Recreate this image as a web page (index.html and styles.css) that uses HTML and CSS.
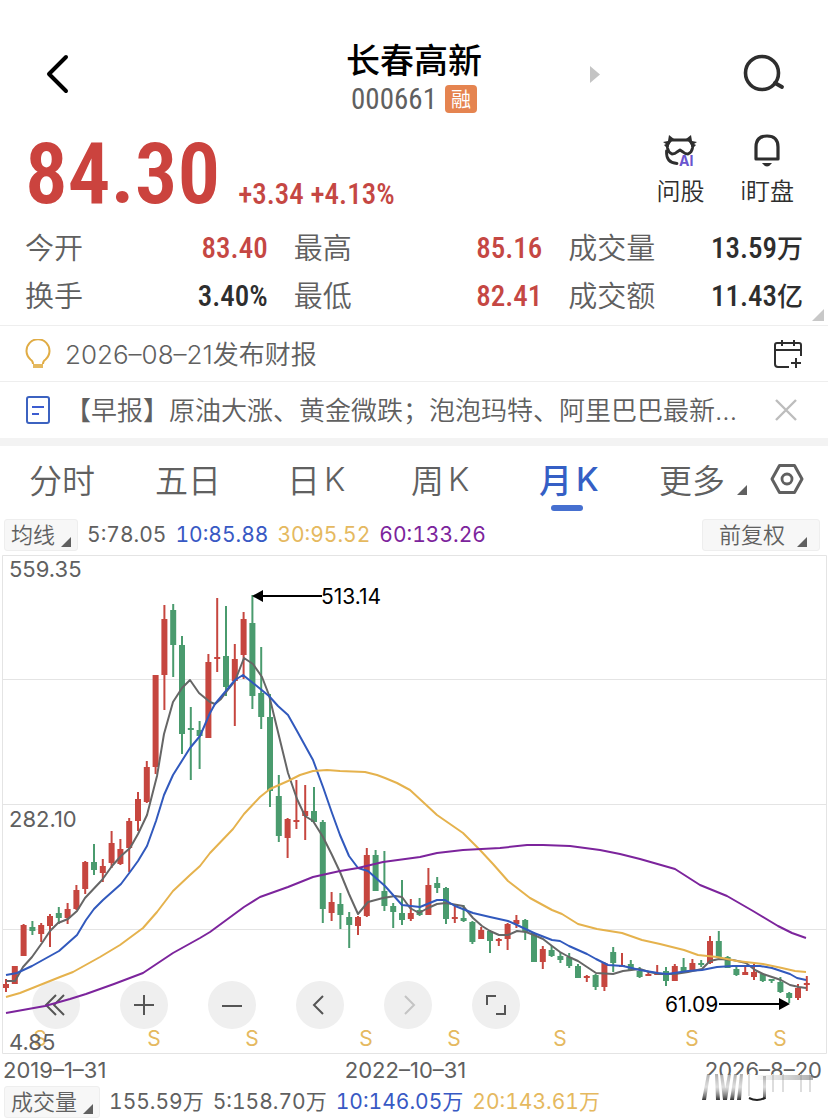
FILE: index.html
```
<!DOCTYPE html>
<html lang="zh-CN">
<head>
  <meta charset="UTF-8" />
  <meta name="viewport" content="width=device-width, initial-scale=1.0"/>
  <title>长春高新 000661</title>
  <link rel="stylesheet" href="styles.css">
</head>
<body>
  <header class="topbar">
    <button class="icon-btn back" aria-label="返回">
      <svg width="24" height="40" viewBox="0 0 24 40"><path d="M21 3 L4 20 L21 37" fill="none" stroke="#000" stroke-width="4" stroke-linecap="round" stroke-linejoin="round"/></svg>
    </button>
    <div class="stock">
      <h1>长春高新</h1>
      <div class="code"><span>000661</span><span class="tag">融</span></div>
    </div>
    <div class="side">
      <button class="icon-btn" aria-label="下一只">
        <svg width="10" height="17" viewBox="0 0 10 17"><path d="M0 0 L10 8.5 L0 17Z" fill="#c4c4c4"/></svg>
      </button>
      <button class="icon-btn" aria-label="搜索">
        <svg width="42" height="40" viewBox="0 0 42 40"><circle cx="19" cy="19" r="16.5" fill="none" stroke="#2e2e2e" stroke-width="3.6"/><path d="M32 29 L39 33" stroke="#2e2e2e" stroke-width="3.8" stroke-linecap="round"/></svg>
      </button>
    </div>
  </header>

  <section class="quote">
    <div class="price">84.30</div>
    <div class="change">+3.34 +4.13%</div>
    <div class="actions">
      <button class="action">
        <svg width="36" height="34" viewBox="0 0 36 34">
          <g fill="none" stroke="#2e2e2e" stroke-width="2.8" stroke-linejoin="round" stroke-linecap="round">
            <path d="M9 6 H27 Q31 9 30.500 14 Q30 18 26 20 Q23 20 21 18 L18 16 L15 18 Q13 20 10 20 Q6 18 5.500 14 Q5 9 9 6Z"/>
            <path d="M4.500 17 Q4 29 15 29.500"/>
          </g>
          <path d="M7 1 L12 5 L9 8 L5 14 L2 11 L4 10 L1 8 L6 7Z M29 1 L24 5 L27 8 L31 14 L34 11 L32 10 L35 8 L30 7Z" fill="#2e2e2e"/>
          <text class="ai" x="17" y="32">AI</text>
        </svg>
        <span>问股</span>
      </button>
      <button class="action">
        <svg width="36" height="34" viewBox="0 0 36 34"><path d="M7 25 V13 Q7 2 18 2 Q29 2 29 13 V25Z" fill="none" stroke="#2e2e2e" stroke-width="3.200" stroke-linejoin="round"/><path d="M13 29 H23 Q18 36 13 29Z" fill="#2e2e2e"/></svg>
        <span>i盯盘</span>
      </button>
    </div>
  </section>

  <section class="stats">
    <dl>
      <div><dt>今开</dt><dd class="up">83.40</dd></div>
      <div><dt>最高</dt><dd class="up">85.16</dd></div>
      <div><dt>成交量</dt><dd>13.59<small>万</small></dd></div>
      <div><dt>换手</dt><dd>3.40%</dd></div>
      <div><dt>最低</dt><dd class="up">82.41</dd></div>
      <div><dt>成交额</dt><dd>11.43<small>亿</small></dd></div>
    </dl>
  </section>

  <section class="notice">
    <svg width="26" height="30" viewBox="0 0 26 30"><path d="M8 25 Q8 22 5.500 20.500 A11.500 11.500 0 1 1 20.500 20.500 Q18 22 18 25" fill="none" stroke="#e0ac45" stroke-width="2"/><path d="M8 25 H18 V29 H8Z" fill="#e5b95f"/></svg>
    <p>2026–08–21发布财报</p>
    <button class="icon-btn" aria-label="添加日程">
      <svg width="30" height="30" viewBox="0 0 30 30"><path d="M28 17 V6 Q28 4 26 4 H4 Q2 4 2 6 V25 Q2 28 5 28 H16 M2 11 H28 M9 1 V7 M21 1 V7 M23 19 V29 M18 24 H28" fill="none" stroke="#2e2e2e" stroke-width="2"/></svg>
    </button>
  </section>
  <section class="notice">
    <svg width="26" height="30" viewBox="0 0 26 30"><rect x="2" y="2" width="22" height="26" rx="2" fill="none" stroke="#3c62c0" stroke-width="2"/><path d="M7 12 H19 M7 19 H14" stroke="#3c5cd0" stroke-width="2"/></svg>
    <p>【早报】原油大涨、黄金微跌；泡泡玛特、阿里巴巴最新...</p>
    <button class="icon-btn close" aria-label="关闭">
      <svg width="22" height="22" viewBox="0 0 22 22"><path d="M1 1 L21 21 M21 1 L1 21" stroke="#bdbdbd" stroke-width="2.400"/></svg>
    </button>
  </section>

  <nav class="tabs">
    <button>分时</button>
    <button>五日</button>
    <button>日<span>K</span></button>
    <button>周<span>K</span></button>
    <button class="active">月<span>K</span></button>
    <button>更多<i class="corner"></i></button>
    <button class="icon-btn" aria-label="设置">
      <svg width="34" height="32" viewBox="0 0 34 32"><path d="M9.500 2.500 H24.500 L32 16 L24.500 29.500 H9.500 L2 16Z" fill="none" stroke="#606060" stroke-width="3" stroke-linejoin="round"/><circle cx="17" cy="16" r="5" fill="none" stroke="#606060" stroke-width="2.800"/></svg>
    </button>
  </nav>

  <div class="legend">
    <button class="pick">均线<i class="corner"></i></button>
    <span>5:78.05</span>
    <span class="ma10">10:85.88</span>
    <span class="ma30">30:95.52</span>
    <span class="ma60">60:133.26</span>
    <button class="pick right">前复权<i class="corner"></i></button>
  </div>

  <main class="chart">
    <div class="tools">
      <button aria-label="最早"><svg viewBox="0 0 48 48"><path d="M24 14 L14 24 L24 34 M32 14 L22 24 L32 34"/></svg></button>
      <button aria-label="放大"><svg viewBox="0 0 48 48"><path d="M24 14 V34 M14 24 H34"/></svg></button>
      <button aria-label="缩小"><svg viewBox="0 0 48 48"><path d="M14 25 H34"/></svg></button>
      <button aria-label="向左"><svg viewBox="0 0 48 48"><path d="M27 15 L18 24 L27 33"/></svg></button>
      <button aria-label="向右" disabled><svg viewBox="0 0 48 48"><path d="M21 15 L30 24 L21 33"/></svg></button>
      <button aria-label="全屏"><svg viewBox="0 0 48 48"><path d="M15 24 V15 H24 M33 24 V33 H24"/></svg></button>
    </div>
    <svg id="kline" viewBox="0 0 828 499">
      <path class="grid" d="M2.500 0.500 H826.500 V498.500 H2.500Z M2.500 124.500 H826.500 M2.500 249.500 H826.500 M2.500 374.500 H826.500"/>
      <g id="candles"></g>
      <g id="averages"></g>
      <g id="signals"></g>
      <text x="9" y="22">559.35</text>
      <text x="9" y="272">282.10</text>
      <text x="9" y="495">4.85</text>
      <g class="mark">
        <path d="M262 41 H322 M719 449 H780"/>
        <path class="head" d="M252 41 L263 35 V47Z M790 449 L779 443 V455Z"/>
        <text x="321" y="49">513.14</text>
        <text x="665" y="457">61.09</text>
      </g>
    </svg>
  </main>

  <div class="dates">
    <span>2019–1–31</span>
    <span>2022–10–31</span>
    <span class="last">2026–8–20
      <svg class="smear" width="124" height="38" viewBox="0 0 124 38">
        <defs>
          <linearGradient id="fade" x1="0" y1="0" x2="0" y2="1">
            <stop offset="0" stop-color="#777" stop-opacity="0.6"/>
            <stop offset="0.5" stop-color="#aaa" stop-opacity="0.4"/>
            <stop offset="1" stop-color="#333"/>
          </linearGradient>
          <linearGradient id="haze" x1="0" y1="0" x2="1" y2="0">
            <stop offset="0" stop-color="#999" stop-opacity="0"/>
            <stop offset="1" stop-color="#777" stop-opacity="0.6"/>
          </linearGradient>
          <filter id="soft"><feGaussianBlur stdDeviation="0.7"/></filter>
        </defs>
        <path d="M0 11 H110 V18 H124 V38 H0Z" fill="#fff"/>
        <g filter="url(#soft)">
          <path d="M6 10 H9 L5 36 H1Z M14 10 H17 L19 36 H15Z M19 10 H22 L26 36 H22Z M27 10 H30 L26 36 H22Z M33 10 H36 L33 36 H29Z M39 10 H42 L40 36 H36Z M62 12 H65 V35 H62Z" fill="url(#fade)"/>
          <path d="M48 10 V32 M72 10 V28 M82 10 V28 M100 10 V28 M109 10 V28" stroke="#ddd" stroke-width="2"/>
          <rect x="50" y="11" width="62" height="5" fill="url(#haze)"/>
        </g>
        <path d="M48 34 Q56 38 64 34" fill="none" stroke="#222" stroke-width="2"/>
      </svg>
    </span>
  </div>

  <div class="legend volume">
    <button class="pick">成交量<i class="corner"></i></button>
    <span>155.59万</span>
    <span>5:158.70万</span>
    <span class="ma10">10:146.05万</span>
    <span class="ma30">20:143.61万</span>
  </div>

  <script>
    const step = 8.8;
    const left = 6;

    // direction, high, body top, body bottom, low (one entry per month)
    const candles = [
      ['r',424,429,433,437], ['r',411,411,429,429], ['r',369,370,401,401], ['g',366,372,376,380],
      ['r',368,370,379,387], ['r',359,361,371,392], ['g',352,358,363,369], ['r',348,354,363,369],
      ['r',330,335,354,355], ['r',306,307,334,339], ['g',289,307,315,320], ['r',304,311,318,327],
      ['r',276,288,308,313], ['r',284,294,309,310], ['r',263,266,293,317], ['r',237,244,266,276],
      ['r',206,212,247,248], ['r',120,120,212,219], ['r',50,64,120,155], ['g',49,55,90,122],
      ['g',81,90,179,199], ['g',152,173,175,225], ['g',166,175,181,214], ['r',99,107,183,183],
      ['r',43,102,103,117], ['g',51,101,132,141], ['r',89,104,126,171], ['r',57,64,100,124],
      ['g',40,68,141,154], ['g',92,138,162,174], ['g',139,162,236,252], ['g',220,241,281,287],
      ['r',263,264,283,303], ['r',225,265,266,274], ['r',230,256,261,285], ['g',232,256,267,268],
      ['g',265,267,354,368], ['r',337,347,358,366], ['g',338,349,360,374], ['g',357,362,370,393],
      ['r',361,362,371,380], ['r',293,300,361,362], ['g',295,300,336,336], ['g',296,336,351,356],
      ['g',348,351,357,373], ['g',325,358,365,370], ['r',344,358,364,366], ['g',343,355,360,361],
      ['r',313,330,360,360], ['g',322,328,333,338], ['g',332,333,364,369], ['r',351,362,363,368],
      ['g',350,363,366,367], ['g',366,367,387,389], ['r',372,375,384,384], ['g',375,376,386,398],
      ['r',383,384,385,391], ['r',368,369,384,395], ['r',360,365,369,373], ['g',364,365,377,385],
      ['g',377,378,407,407], ['r',391,394,407,414], ['g',391,395,401,402], ['g',397,401,405,408],
      ['g',398,402,411,413], ['g',409,411,423,423], ['r',420,421,422,427], ['g',419,420,432,435],
      ['r',407,408,432,436], ['g',392,397,408,417], ['r',398,410,411,412], ['g',405,409,415,415],
      ['g',412,416,422,423], ['r',417,419,421,421], ['r',410,418,420,420], ['g',412,416,426,431],
      ['r',409,411,426,426], ['g',403,412,416,417], ['r',404,408,416,416], ['g',405,408,410,412],
      ['r',381,386,408,409], ['g',376,386,402,402], ['g',401,402,413,413], ['g',412,414,420,421],
      ['r',410,417,420,420], ['r',409,417,422,425], ['g',418,419,426,427], ['g',424,424,425,428],
      ['g',422,427,437,438], ['g',437,438,443,448], ['r',429,433,443,445], ['r',421,428,429,436]
    ];

    const averages = {
      ma5: '6,426 15,426 23,412 32,402 42,388 50,376 58,368 68,364 77,356 85,343 102,325 112,311 121,301 130,293 138,279 147,260 157,221 164,179 173,147 182,133 190,125 199,138 210,147 215,149 221,144 227,136 235,126 244,103 253,109 262,122 269,140 278,177 288,218 297,244 305,261 313,266 323,282 332,300 340,317 349,339 358,359 368,347 383,343 395,341 402,342 410,353 419,358 428,353 437,349 446,348 463,351 473,363 482,371 490,376 499,380 508,380 517,376 526,377 534,380 543,384 552,391 560,397 569,402 578,406 587,412 596,418 613,419 623,416 640,414 649,417 660,419 675,419 688,417 702,414 710,406 719,404 733,405 746,408 755,415 763,419 781,425 790,430 799,432 806,433',
      ma10: '6,420 17,418 32,411 50,401 59,396 77,380 86,365 94,354 103,345 121,329 130,317 138,306 147,291 156,266 164,240 173,220 190,193 200,181 210,158 215,149 225,137 235,125 243,120 253,128 269,141 278,151 288,160 297,176 313,205 323,232 332,258 340,280 349,301 358,313 368,316 385,331 402,350 411,351 420,352 437,345 445,345 455,351 473,358 490,362 508,366 517,370 534,378 552,385 560,386 569,391 587,399 596,404 608,410 623,411 640,415 658,418 667,419 688,416 702,415 717,412 733,411 760,411 772,413 781,416 790,419 797,423 806,425',
      ma30: '6,442 20,438 40,430 60,422 73,417 100,402 120,390 143,373 157,357 173,336 190,320 200,311 210,298 233,274 244,259 260,242 270,234 288,226 300,220 313,216 327,215 340,216 365,217 377,220 385,223 397,228 410,235 423,247 437,260 463,278 480,295 493,309 508,326 530,343 552,355 562,359 578,369 597,374 622,378 642,385 660,389 684,395 698,400 717,402 737,406 763,409 782,413 795,416 806,417',
      ma60: '6,458 45,451 70,444 86,439 114,429 143,418 173,398 200,383 210,377 244,352 260,342 288,332 313,322 340,316 358,313 383,307 420,302 437,298 463,295 500,293 527,290 543,290 570,291 600,295 620,299 640,304 675,314 700,330 727,341 753,356 778,371 792,378 806,383'
    };

    const signals = [40, 154, 252, 366, 454, 560, 692, 780];

    document.getElementById('candles').innerHTML = candles.map(([dir, high, top, bottom, low], i) => {
      const x = left + i * step;
      return `<g class="${dir}"><path d="M${x} ${high} V${low}"/><rect x="${x - 3}" y="${top}" width="6" height="${Math.max(2, bottom - top)}"/></g>`;
    }).join('');

    document.getElementById('averages').innerHTML = Object.keys(averages).map(name =>
      `<polyline class="${name}" points="${averages[name]}"/>`
    ).join('');

    document.getElementById('signals').innerHTML = signals.map(x =>
      `<text x="${x}" y="491">S</text>`
    ).join('');
  </script>
</body>
</html>
```
FILE: styles.css
```
* { box-sizing: border-box; }
body { margin: 0; background: #fff; color: #606060; font-family: Inter, "Noto Sans CJK SC", sans-serif; overflow-x: hidden; }
button { border: 0; padding: 0; background: none; color: inherit; font: inherit; cursor: pointer; }
svg { display: block; }
h1, p, dl, dd { margin: 0; }

.topbar { display: grid; grid-template-columns: 1fr auto 1fr; align-items: center; padding: 40px 43px 0 43px; }
.back { justify-self: start; margin: 0 0 8px 2px; }
.side { display: flex; align-items: center; justify-content: space-between; margin: 0 0 8px 108px; }
.stock { display: flex; flex-direction: column; align-items: center; }
.stock h1 { color: #000; font-size: 34px; font-weight: 500; line-height: 42px; }
.code { display: flex; align-items: center; gap: 8px; font: 400 29px/34px "Roboto Condensed", "Liberation Sans Narrow", Roboto, sans-serif; }
.tag { width: 32px; height: 28px; border-radius: 4px; background: #e58450; color: #fff; font: 20px/28px "Noto Sans CJK SC", sans-serif; text-align: center; }

.quote { display: flex; align-items: flex-end; padding: 16px 34px 0 25px; }
.price, .change, dd { font-family: "Roboto Condensed", "Liberation Sans Narrow", Roboto, "Noto Sans CJK SC", sans-serif; font-weight: 500; }
.price { color: #cb433e; font-size: 85px; font-weight: 600; line-height: 84px; }
.change { margin-left: 18px; color: #c54743; font-size: 29px; line-height: 44px; }
.actions { display: flex; gap: 36px; margin-left: auto; padding-bottom: 6px; }
.action { display: flex; flex-direction: column; align-items: center; gap: 6px; color: #2e2e2e; font-size: 24px; font-weight: 350; line-height: 36px; }
.ai { fill: #6a55cf; font: 700 14px Inter, sans-serif; }

.stats { position: relative; padding: 6px 25px 7px; border-bottom: 1px solid #eee; }
.stats::after { content: ""; position: absolute; right: 4px; bottom: 4px; border: 6px solid; border-color: transparent #c8c8c8 #c8c8c8 transparent; }
.stats dl { display: grid; grid-template-columns: 242fr 248fr 234fr; column-gap: 26px; }
.stats dl div { display: flex; justify-content: space-between; align-items: center; height: 48px; }
dt { font-size: 29px; font-weight: 350; }
dd { padding-top: 4px; color: #2e2e2e; font-size: 29px; line-height: 36px; }
dd small { font-size: 26px; }
dd.up { color: #c54743; }

.notice { display: flex; align-items: center; gap: 14px; height: 56px; padding: 0 25px; border-bottom: 1px solid #eee; font-size: 26px; font-weight: 350; }
.notice p { flex: 1; padding-top: 2px; line-height: 36px; white-space: nowrap; }
.notice .close { padding-right: 6px; }
.notice + .notice { border-bottom: 0; }

.tabs { display: grid; grid-template-columns: 126fr 132fr 124fr 128fr 120fr 111fr 34px; align-items: center; height: 81px; padding: 0 24px 7px 29px; border-top: 8px solid #f3f3f3; font-size: 33px; font-weight: 350; }
.tabs button { position: relative; justify-self: start; display: flex; align-items: center; gap: 4px; height: 60px; }
.tabs .active { color: #355fc5; font-weight: 500; }
.tabs .active::after { content: ""; position: absolute; left: 12px; bottom: -2px; width: 32px; height: 6px; border-radius: 3px; background: #4670d0; }
.corner { align-self: flex-end; border: 5px solid; border-color: transparent #606060 #606060 transparent; }
.tabs .corner { margin: 0 0 14px 8px; }

.legend { display: flex; align-items: center; gap: 9px; padding: 0 8px 4px 4px; font-size: 21px; line-height: 30px; font-variant-numeric: tabular-nums; white-space: nowrap; }
.pick { display: flex; align-items: center; gap: 6px; height: 32px; padding: 0 6px; border: 1px solid #eee; border-radius: 3px; background: #f7f7f7; font-size: 22px; font-weight: 350; }
.pick .corner { margin-bottom: 3px; }
.pick.right { gap: 12px; margin-left: auto; padding: 0 12px 0 16px; }
span.ma10 { color: #3859c4; }
span.ma30 { color: #e5b95f; }
span.ma60 { color: #7c249c; }

.chart { position: relative; }
.tools { position: absolute; left: 32px; bottom: 25px; display: flex; gap: 40px; }
.tools button { width: 48px; height: 48px; border-radius: 50%; background: #efefef; }
.tools path { fill: none; stroke: #555; stroke-width: 2; }
.tools button:disabled path { stroke: #c4c4c4; }
#kline { position: relative; width: 100%; pointer-events: none; font-size: 22px; fill: #606060; }
.grid { fill: none; stroke: #e4e4e4; }
.r { stroke: #c6463f; fill: #c6463f; }
.g { stroke: #4a9b6e; fill: #4a9b6e; }
.r path, .g path { stroke-width: 2; }
.r rect, .g rect { stroke: none; }
polyline { fill: none; stroke-width: 2; stroke-linejoin: round; }
.ma5 { stroke: #666; }
.ma10 { stroke: #3159bd; }
.ma30 { stroke: #e5b24d; }
.ma60 { stroke: #7c249c; }
#signals text { fill: #e5b95f; font-size: 21px; text-anchor: middle; }
.mark { stroke: #000; stroke-width: 2; }
.mark .head { stroke: none; fill: #000; }
.mark text { stroke: none; fill: #000; font-size: 21px; }

.dates { display: flex; justify-content: space-between; padding: 2px 6px 0 3px; font-size: 22px; line-height: 28px; }
.last { position: relative; }
.smear { position: absolute; left: -4px; top: 8px; }
.volume { padding-top: 2px; }
```
